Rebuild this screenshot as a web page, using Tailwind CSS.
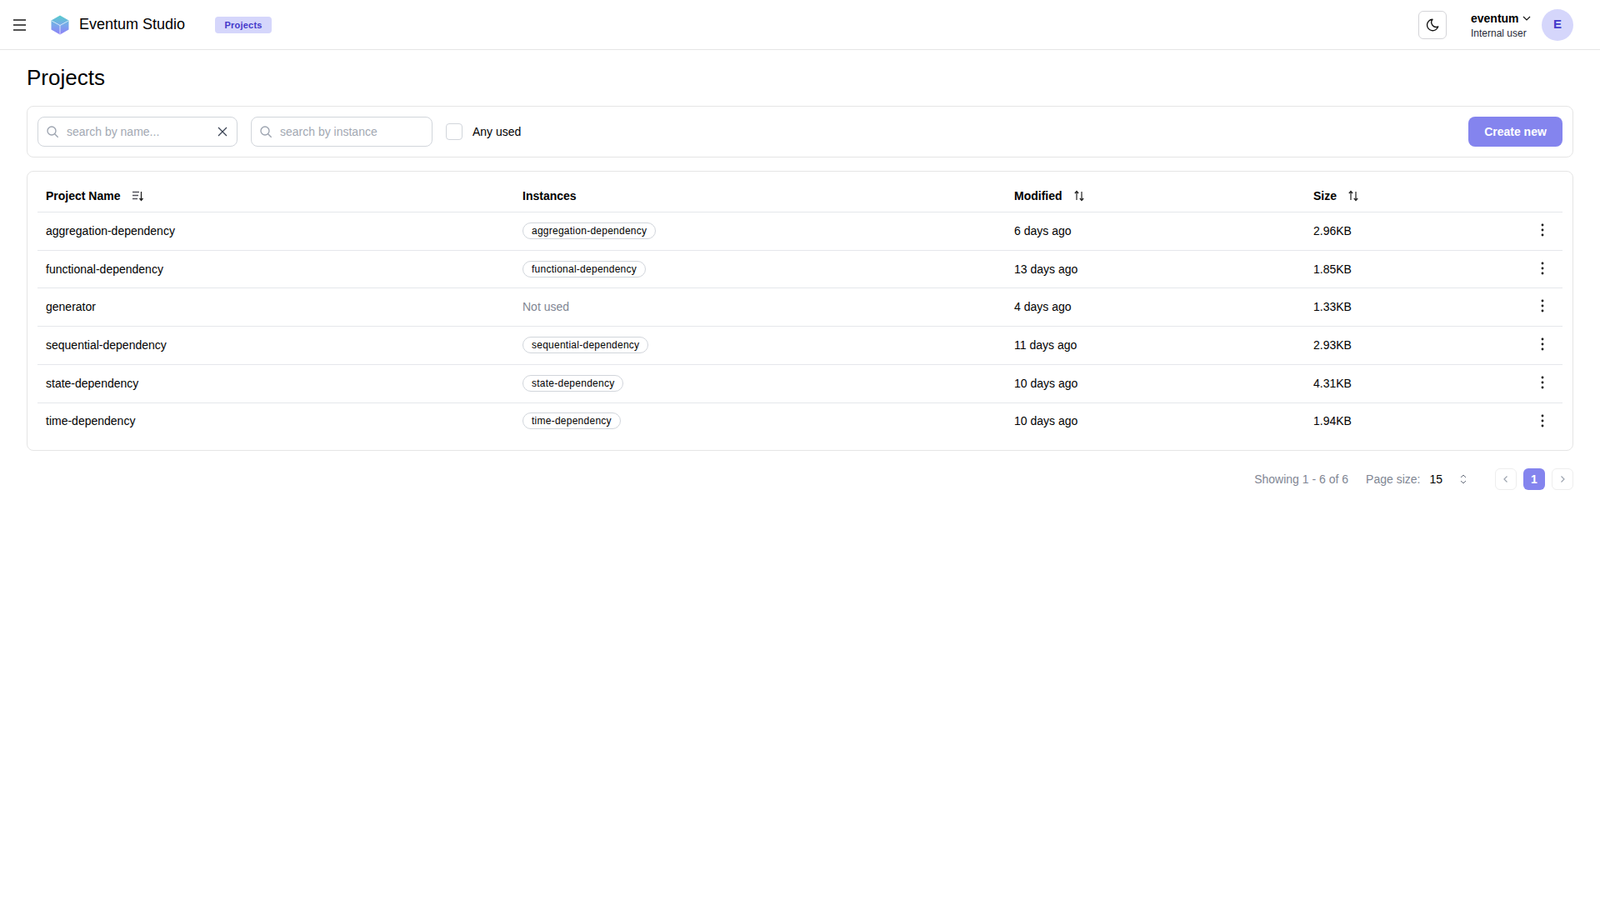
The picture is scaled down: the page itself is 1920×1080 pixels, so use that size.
<!doctype html>
<html><head><meta charset="utf-8"><title>Projects</title>
<script src="https://cdn.jsdelivr.net/npm/@tailwindcss/browser@4"></script></head>
<body class="bg-white text-black font-['Liberation_Sans',Arial,sans-serif] h-[1080px] overflow-hidden">
<header class="h-[60px] border-b border-[#e5e5e5] flex items-center pl-3 pr-8">
  <svg class="w-6 h-6 text-[#525252]" viewBox="0 0 24 24" fill="none" stroke="currentColor" stroke-width="2" stroke-linecap="butt"><path d="M4 6h15M4 12h15M4 18h15"/></svg>
  <svg class="w-6 h-6 ml-6" viewBox="0 0 24 24"><defs><linearGradient id="a" x1="0" y1="0" x2="0" y2="1"><stop offset="0" stop-color="#58cccc"/><stop offset=".5" stop-color="#78a8ea"/><stop offset="1" stop-color="#8f80f8"/></linearGradient></defs><path d="M12 .5 22.500 6.500V17.500L12 23.500 1.500 17.500V6.500z" fill="url(#a)"/><path d="M2 7 12 12.500 22 7M12 12.500V23" fill="none" stroke="#fff" stroke-opacity=".7" stroke-width="1"/></svg>
  <span class="ml-[11px] text-lg leading-7 mb-[2px]">Eventum Studio</span>
  <span class="ml-9 h-5 w-[68px] rounded bg-[#d5d6fb] text-[#4338ca] text-[11px] font-bold flex items-center justify-center tracking-[.2px] pt-[1px]">Projects</span>
  <div class="ml-auto flex items-center">
    <button class="w-[34px] h-[34px] rounded-md border border-[#d4d4d8] flex items-center justify-center"><svg class="w-[18px] h-[18px]" viewBox="0 0 24 24" fill="none" stroke="#111" stroke-width="1.800" stroke-linecap="round" stroke-linejoin="round"><path d="M12 3a9 9 0 1 0 9 11.500A7.500 7.500 0 0 1 12 3z"/></svg></button>
    <div class="ml-[29px] w-[72px] pt-[2px]">
      <div class="flex items-center text-sm leading-4 font-bold whitespace-nowrap">eventum<svg class="w-3 h-3 ml-[3px] shrink-0" viewBox="0 0 12 12" fill="none" stroke="#111" stroke-width="1.200"><path d="M2 4l4 4 4-4"/></svg></div>
      <div class="text-xs leading-4 mt-[2px] text-[#1f2937] whitespace-nowrap">Internal user</div>
    </div>
    <div class="ml-[13px] w-[38px] h-[38px] rounded-full bg-[#d5d6fb] text-[#4338ca] font-bold text-[15px] flex items-center justify-center">E</div>
  </div>
</header>
<main class="px-8">
  <h1 class="text-[26px] leading-8 mt-[17px]">Projects</h1>
  <section class="mt-[18px] h-[62px] border border-[#e5e5e5] rounded-lg px-3 flex items-center">
    <div class="w-60 h-9 border border-[#d1d5db] rounded-lg flex items-center pl-[9px] pr-[10px] text-sm">
      <svg class="w-4 h-4 text-[#9ca3af]" viewBox="0 0 24 24" fill="none" stroke="currentColor" stroke-width="2"><circle cx="10.500" cy="10.500" r="7.500"/><path d="M16 16l6 6"/></svg>
      <span class="ml-[9px] text-[#a3a9b3]">search by name...</span>
      <svg class="w-[14px] h-[14px] ml-auto" viewBox="0 0 14 14" fill="none" stroke="#374151" stroke-width="1.200"><path d="M2 2l10 10M12 2 2 12"/></svg>
    </div>
    <div class="ml-4 w-[218px] h-9 border border-[#d1d5db] rounded-lg flex items-center pl-[9px] text-sm">
      <svg class="w-4 h-4 text-[#9ca3af]" viewBox="0 0 24 24" fill="none" stroke="currentColor" stroke-width="2"><circle cx="10.500" cy="10.500" r="7.500"/><path d="M16 16l6 6"/></svg>
      <span class="ml-[9px] text-[#a3a9b3]">search by instance</span>
    </div>
    <div class="ml-4 w-5 h-5 border border-[#d1d5db] rounded"></div>
    <span class="ml-3 text-sm">Any used</span>
    <button class="ml-auto w-[113px] h-9 rounded-lg bg-[#8484ee] text-white text-sm font-bold">Create new</button>
  </section>
  <section class="mt-4 h-[336px] border border-[#e5e5e5] rounded-lg px-3 pt-2">
    <table class="w-full table-fixed text-sm border-collapse">
      <colgroup><col class="w-[572px]"><col class="w-[590px]"><col class="w-[359px]"><col class="w-[220px]"><col></colgroup>
      <thead><tr class="h-[40px] border-b border-[#e5e7eb] text-left">
        <th class="pl-[10px] pt-[2px] font-bold"><span class="flex items-center">Project Name<svg class="w-[14px] h-[14px] ml-[15px]" viewBox="0 0 14 14" fill="none" stroke="#52525b" stroke-width="1.300"><path d="M0 2.500h8M0 6.500h7M0 10.500h6"/><path d="M10.500 2v10M8.500 10l2 2.500 2-2.500" stroke="#222"/></svg></span></th>
        <th class="pl-[10px] pt-[2px] font-bold">Instances</th>
        <th class="pl-[10px] pt-[2px] font-bold"><span class="flex items-center">Modified<svg class="w-[14px] h-[14px] ml-[13px] mt-[1px]" viewBox="0 0 14 14" fill="none" stroke="#222" stroke-width="1.200"><path d="M4 12V1.500M1.800 4 4 1.500 6.200 4M10 2v10.500M7.800 10l2.200 2.500 2.200-2.500"/></svg></span></th>
        <th class="pl-[10px] pt-[2px] font-bold"><span class="flex items-center">Size<svg class="w-[14px] h-[14px] ml-[13px] mt-[1px]" viewBox="0 0 14 14" fill="none" stroke="#222" stroke-width="1.200"><path d="M4 12V1.500M1.800 4 4 1.500 6.200 4M10 2v10.500M7.800 10l2.200 2.500 2.200-2.500"/></svg></span></th>
        <th></th>
      </tr></thead>
      <tbody>
        <tr class="h-[46px] border-b border-[#e5e7eb]"><td class="pl-[10px]">aggregation-dependency</td><td class="pl-[10px]"><span class="inline-flex items-center h-5 px-[10px] border border-[#d1d5db] rounded-full text-xs tracking-[.25px] -translate-y-px">aggregation-dependency</span></td><td class="pl-[10px]">6 days ago</td><td class="pl-[10px]">2.96KB</td><td><svg class="w-4 h-4 ml-[57px] -mt-[2px]" viewBox="0 0 16 16" fill="#111"><circle cx="8" cy="2" r="1.400"/><circle cx="8" cy="8" r="1.400"/><circle cx="8" cy="14" r="1.400"/></svg></td></tr>
        <tr class="h-[45px] border-b border-[#e5e7eb]"><td class="pl-[10px]">functional-dependency</td><td class="pl-[10px]"><span class="inline-flex items-center h-5 px-[10px] border border-[#d1d5db] rounded-full text-xs tracking-[.25px]">functional-dependency</span></td><td class="pl-[10px]">13 days ago</td><td class="pl-[10px]">1.85KB</td><td><svg class="w-4 h-4 ml-[57px] -mt-[2px]" viewBox="0 0 16 16" fill="#111"><circle cx="8" cy="2" r="1.400"/><circle cx="8" cy="8" r="1.400"/><circle cx="8" cy="14" r="1.400"/></svg></td></tr>
        <tr class="h-[46px] border-b border-[#e5e7eb]"><td class="pl-[10px]">generator</td><td class="pl-[10px] text-[#7f8693]">Not used</td><td class="pl-[10px]">4 days ago</td><td class="pl-[10px]">1.33KB</td><td><svg class="w-4 h-4 ml-[57px] -mt-[2px]" viewBox="0 0 16 16" fill="#111"><circle cx="8" cy="2" r="1.400"/><circle cx="8" cy="8" r="1.400"/><circle cx="8" cy="14" r="1.400"/></svg></td></tr>
        <tr class="h-[46px] border-b border-[#e5e7eb]"><td class="pl-[10px]">sequential-dependency</td><td class="pl-[10px]"><span class="inline-flex items-center h-5 px-[10px] border border-[#d1d5db] rounded-full text-xs tracking-[.25px] -translate-y-px">sequential-dependency</span></td><td class="pl-[10px]">11 days ago</td><td class="pl-[10px]">2.93KB</td><td><svg class="w-4 h-4 ml-[57px] -mt-[2px]" viewBox="0 0 16 16" fill="#111"><circle cx="8" cy="2" r="1.400"/><circle cx="8" cy="8" r="1.400"/><circle cx="8" cy="14" r="1.400"/></svg></td></tr>
        <tr class="h-[46px] border-b border-[#e5e7eb]"><td class="pl-[10px]">state-dependency</td><td class="pl-[10px]"><span class="inline-flex items-center h-5 px-[10px] border border-[#d1d5db] rounded-full text-xs tracking-[.25px] -translate-y-px">state-dependency</span></td><td class="pl-[10px]">10 days ago</td><td class="pl-[10px]">4.31KB</td><td><svg class="w-4 h-4 ml-[57px] -mt-[2px]" viewBox="0 0 16 16" fill="#111"><circle cx="8" cy="2" r="1.400"/><circle cx="8" cy="8" r="1.400"/><circle cx="8" cy="14" r="1.400"/></svg></td></tr>
        <tr class="h-[44px]"><td class="pl-[10px]">time-dependency</td><td class="pl-[10px]"><span class="inline-flex items-center h-5 px-[10px] border border-[#d1d5db] rounded-full text-xs tracking-[.25px] -translate-y-px">time-dependency</span></td><td class="pl-[10px]">10 days ago</td><td class="pl-[10px]">1.94KB</td><td><svg class="w-4 h-4 ml-[57px] -mt-[1px]" viewBox="0 0 16 16" fill="#111"><circle cx="8" cy="2" r="1.400"/><circle cx="8" cy="8" r="1.400"/><circle cx="8" cy="14" r="1.400"/></svg></td></tr>
      </tbody>
    </table>
  </section>
  <nav class="mt-[21px] h-[26px] flex items-center justify-end text-sm text-[#7f8693]">
    <span>Showing 1 - 6 of 6</span>
    <span class="ml-[21px]">Page size:</span>
    <span class="ml-[11px] text-black">15</span>
    <svg class="w-3 h-4 ml-[19px]" viewBox="0 0 12 16" fill="none" stroke="#6b7280" stroke-width="1"><path d="M3 6l3-3 3 3M3 10l3 3 3-3"/></svg>
    <span class="ml-8 w-[26px] h-[26px] rounded-md border border-[#eeeeee] flex items-center justify-center"><svg class="w-3 h-3" viewBox="0 0 12 12" fill="none" stroke="#9ca3af" stroke-width="1.200"><path d="M7.500 2.500 4 6l3.500 3.500"/></svg></span>
    <span class="ml-2 w-[26px] h-[26px] rounded-md bg-[#8484ee] text-white font-bold flex items-center justify-center">1</span>
    <span class="ml-2 w-[26px] h-[26px] rounded-md border border-[#eeeeee] flex items-center justify-center"><svg class="w-3 h-3" viewBox="0 0 12 12" fill="none" stroke="#9ca3af" stroke-width="1.200"><path d="M4.500 2.500 8 6 4.500 9.500"/></svg></span>
  </nav>
</main>
</body></html>
